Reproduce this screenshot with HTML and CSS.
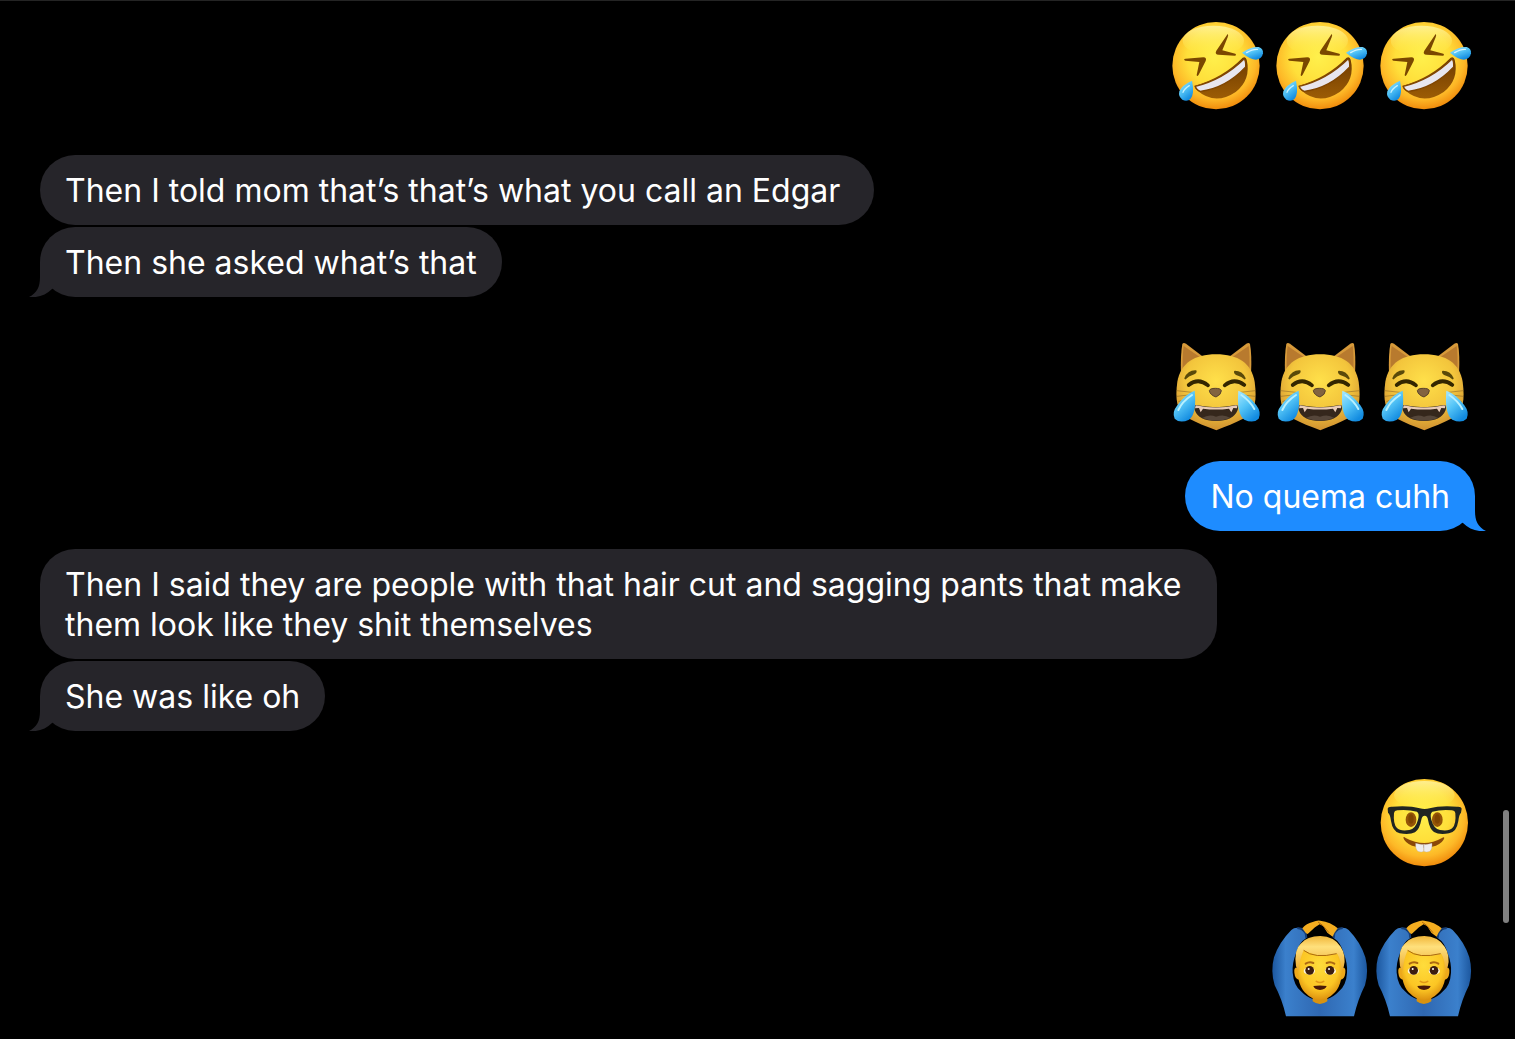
FILE: index.html
```html
<!DOCTYPE html>
<html lang="en">
<head>
    <meta charset="UTF-8">
    <meta name="viewport" content="width=device-width, initial-scale=1.0">
    <title>Messages</title>
    <link rel="stylesheet" href="styles.css">
</head>
<body>

    <!-- Shared drawings -->
    <svg class="defs" aria-hidden="true">
        <defs>
            <radialGradient id="face" cx="0.48" cy="0.4" r="0.62">
                <stop offset="0" stop-color="#fff04c"/>
                <stop offset="0.5" stop-color="#ffdf3a"/>
                <stop offset="0.78" stop-color="#fdb827"/>
                <stop offset="1" stop-color="#ee8408"/>
            </radialGradient>
            <linearGradient id="shine" x1="0" y1="0" x2="0" y2="1">
                <stop offset="0" stop-color="#fff6a8" stop-opacity="0.8"/>
                <stop offset="1" stop-color="#fff04c" stop-opacity="0"/>
            </linearGradient>
            <linearGradient id="tear" x1="0" y1="0" x2="0.6" y2="1">
                <stop offset="0" stop-color="#a9e9ff"/>
                <stop offset="0.5" stop-color="#55c5f7"/>
                <stop offset="1" stop-color="#128be0"/>
            </linearGradient>
            <linearGradient id="mouth" x1="0" y1="0" x2="0" y2="1">
                <stop offset="0" stop-color="#6e3a00"/>
                <stop offset="1" stop-color="#9c5c05"/>
            </linearGradient>
            <radialGradient id="fur" cx="0.5" cy="0.35" r="0.65">
                <stop offset="0" stop-color="#ffe04a"/>
                <stop offset="0.6" stop-color="#f3c53c"/>
                <stop offset="1" stop-color="#cf9030"/>
            </radialGradient>
            <linearGradient id="sleeve" x1="0" y1="0" x2="1" y2="0">
                <stop offset="0" stop-color="#1c579f"/>
                <stop offset="0.14" stop-color="#3b80cc"/>
                <stop offset="0.5" stop-color="#2f68b2"/>
                <stop offset="0.86" stop-color="#3b80cc"/>
                <stop offset="1" stop-color="#1c579f"/>
            </linearGradient>
            <radialGradient id="skin" cx="0.5" cy="0.4" r="0.6">
                <stop offset="0" stop-color="#ffdc3c"/>
                <stop offset="0.7" stop-color="#fcc624"/>
                <stop offset="1" stop-color="#dd9210"/>
            </radialGradient>
            <linearGradient id="hair" x1="0" y1="0" x2="0" y2="1">
                <stop offset="0" stop-color="#f0b63a"/>
                <stop offset="0.3" stop-color="#ffe07c"/>
                <stop offset="1" stop-color="#e9a72c"/>
            </linearGradient>
        </defs>

        <symbol id="rofl" viewBox="9 12 312 312">
            <circle cx="168" cy="167" r="131" fill="url(#face)"/>
            <ellipse cx="160" cy="92" rx="92" ry="45" fill="url(#shine)"/>
            <path d="M203 72 Q206 75 203 82 L187 121 L226 131 Q231 135 224 137 L176 134 Q163 133 169 122 Z" fill="#7a4700"/>
            <path d="M73 147 Q71 150 76 152 L118 156 L110 195 Q111 202 116 194 L137 153 Q141 143 130 142 L77 146 Z" fill="#7a4700"/>
            <path d="M104 227 Q188 204 248 143 Q257 138 260 149 Q274 208 227 246 Q165 288 111 241 Q102 232 104 227 Z" fill="url(#mouth)"/>
            <path d="M106 229 Q189 209 252 147 Q258 151 257 171 Q197 235 121 244 Q110 241 106 229 Z" fill="#e8e6ee" stroke="#804500" stroke-width="4"/>
            <path d="M246 128 Q273 109 296 111 Q310 115 309 130 Q306 147 288 149 Q271 149 246 128 Z" fill="url(#tear)"/>
            <path d="M260 128 Q278 117 292 118" fill="none" stroke="#d4f5ff" stroke-width="4" stroke-linecap="round"/>
            <path d="M96 212 Q66 225 58 244 Q54 259 67 269 Q82 276 92 266 Q104 250 96 212 Z" fill="url(#tear)"/>
            <path d="M88 227 Q72 237 69 247" fill="none" stroke="#c3f0ff" stroke-width="4" stroke-linecap="round"/>
        </symbol>

        <symbol id="joycat" viewBox="9 12 312 312">
            <path d="M63 132 Q61 75 67 42 Q70 36 78 41 L134 84 Z" fill="#d79a3a"/>
            <path d="M68 122 Q67 76 71 48 L124 84 Z" fill="#b87a2e"/>
            <path d="M273 132 Q276 75 270 42 Q267 36 259 41 L203 84 Z" fill="#d79a3a"/>
            <path d="M268 122 Q270 76 266 48 L213 84 Z" fill="#b87a2e"/>
            <path d="M168 73 C235 73 274 100 284 155 C291 209 286 243 258 262 C225 279 195 291 169 301 C141 291 112 279 79 262 C50 242 45 207 52 155 C62 100 103 73 168 73 Z" fill="url(#fur)"/>
            <path d="M80 141 Q90 119 111 120 Q111 126 101 128 Q89 131 80 141 Z M258 141 Q249 121 229 121 Q228 127 239 130 Q250 133 258 141 Z" transform="translate(-4 4)" fill="#5a4a0a" stroke="#5a4a0a" stroke-width="6" stroke-linejoin="round"/>
            <path d="M86 165 Q115 142 144 166 M194 166 Q223 142 253 165" fill="none" stroke="#332600" stroke-width="11" stroke-linecap="round"/>
            <path d="M50 182 L96 187 M51 199 L94 194 M55 215 L93 201 M286 182 L241 187 M285 199 L241 194 M281 215 L243 201" stroke="#98702a" stroke-width="2"/>
            <path d="M148 182 Q150 175 166 175 Q182 175 184 182 Q184 194 168 201 Q150 195 148 182 Z" fill="#826340" stroke="#5b4329" stroke-width="3"/>
            <path d="M108 225 Q168 238 228 225 Q237 225 233 240 Q220 273 168 273 Q116 273 104 240 Q101 225 108 225 Z" fill="#35271c"/>
            <path d="M107 226 Q168 239 229 226 Q234 228 231 235 L220 234 L214 247 L207 236 Q168 241 129 236 L122 247 L117 234 L105 235 Z" fill="#e9cbb7"/>
            <path d="M126 264 Q147 251 168 260 Q192 251 211 264 Q168 280 126 264 Z" fill="#55463a"/>
            <path d="M104 182 Q74 193 52 226 Q35 247 44 266 Q60 282 87 269 Q111 251 104 182 Z" fill="url(#tear)"/>
            <path d="M235 182 Q266 193 289 226 Q305 247 296 266 Q280 282 253 269 Q229 251 235 182 Z" fill="url(#tear)"/>
            <path d="M96 195 Q66 215 55 240 M244 195 Q270 213 283 237" fill="none" stroke="#b8f0ff" stroke-width="6" stroke-linecap="round"/>
        </symbol>

        <symbol id="nerd" viewBox="3 -3 312 312">
            <circle cx="163" cy="158" r="131" fill="url(#face)"/>
            <ellipse cx="163" cy="75" rx="91" ry="42" fill="url(#shine)"/>
            <ellipse cx="123" cy="149" rx="16" ry="22" fill="#955407"/>
            <ellipse cx="202" cy="149" rx="16" ry="22" fill="#955407"/>
            <ellipse cx="123" cy="147" rx="8" ry="14" fill="#804500"/>
            <ellipse cx="202" cy="147" rx="8" ry="14" fill="#804500"/>
            <path fill-rule="evenodd" d="M53 116 Q54 109 67 110 Q119 106 149 115 Q164 119 179 115 Q209 106 261 110 Q274 109 275 116 L273 128 Q267 134 265 153 Q260 186 237 190 Q207 195 192 186 Q179 177 174 149 Q172 137 164 137 Q156 137 154 149 Q149 177 135 187 Q119 195 89 190 Q68 185 63 153 Q61 134 54 128 Z M72 129 Q69 163 81 174 Q90 184 118 180 Q137 176 144 149 Q149 130 141 125 Q114 118 82 121 Q73 122 72 129 Z M256 129 Q259 163 247 174 Q238 184 210 180 Q191 176 184 149 Q179 130 187 125 Q214 118 246 121 Q255 122 256 129 Z" fill="#202522"/>
            <path d="M100 203 Q101 199 107 204 Q163 234 216 204 Q222 199 223 204 Q219 218 198 227 Q163 239 126 227 Q104 217 100 203 Z" fill="#8a4808"/>
            <path d="M137 220 Q149 224 161 223 V244 Q154 248 144 244 Q136 239 137 220 Z M162 223 Q174 224 186 220 Q187 239 179 244 Q169 248 162 244 Z" fill="#eeedf0" stroke="#b8afb0" stroke-width="1"/>
        </symbol>

        <symbol id="ok-man" viewBox="21 0 312 312">
            <path d="M78 319 Q66 267 44 226 Q31 184 42 142 Q57 97 94 60 Q103 52 117 54 L136 70 L139 84 Q116 98 108 130 Q96 160 98 188 Q101 225 123 244 Q140 262 158 267 L202 267 Q220 262 237 244 Q259 225 261 188 Q263 160 251 130 Q243 98 221 84 L224 70 L243 54 Q257 52 266 60 Q302 97 316 142 Q327 184 315 226 Q294 267 282 319 Z" fill="url(#sleeve)"/>
            <path d="M112 54 L127 57 L137 70 L139 84 M248 54 L233 57 L223 70 L221 84" fill="none" stroke="#173f78" stroke-width="6" stroke-linejoin="round"/>
            <path d="M127 55 Q139 40 158 36 Q171 30 181 32 Q212 36 233 55 L223 69 L218 80 L202 68 L190 49 L179 43 L165 52 L143 72 L138 70 Z" fill="#f4ad20"/>
            <path d="M174 36 L188 46 L207 68" fill="none" stroke="#b96d0b" stroke-width="3"/>
            <path d="M158 254 V274 Q179 290 202 274 V254 Z" fill="#d9930f"/>
            <path d="M113 173 Q101 171 103 188 Q105 209 119 209 Z M246 173 Q258 171 256 188 Q254 209 240 209 Z" fill="#eda81b"/>
            <path d="M112 150 Q112 96 180 96 Q247 96 246 150 Q251 218 225 247 Q203 270 180 270 Q156 270 134 247 Q108 218 112 150 Z" fill="url(#skin)"/>
            <path d="M108 169 Q101 119 122 101 Q141 78 181 78 Q222 79 242 110 Q260 137 251 171 L243 185 Q244 151 232 131 Q187 144 148 128 L131 121 Q119 147 116 184 Z" fill="url(#hair)"/>
            <path d="M131 121 Q163 147 230 131" fill="none" stroke="#aa690d" stroke-width="3"/>
            <path d="M137 161 Q148 154 160 159 M200 159 Q212 154 223 161" fill="none" stroke="#ad6912" stroke-width="6" stroke-linecap="round"/>
            <ellipse cx="148" cy="183" rx="17" ry="11" fill="#fff5dc"/>
            <ellipse cx="211" cy="183" rx="17" ry="11" fill="#fff5dc"/>
            <circle cx="149" cy="181" r="13" fill="#3d1d10"/>
            <circle cx="210" cy="181" r="13" fill="#3d1d10"/>
            <circle cx="146" cy="177" r="3" fill="#fff"/>
            <circle cx="207" cy="177" r="3" fill="#fff"/>
            <path d="M169 214 Q180 221 191 214" fill="none" stroke="#e19816" stroke-width="5" stroke-linecap="round"/>
            <path d="M160 228 Q180 225 200 228 Q197 239 180 240 Q163 239 160 228 Z" fill="#4a1a08"/>
        </symbol>

        <symbol id="tail" viewBox="0 0 30 35">
            <path d="M11 0 V15 C11 25 8 31 0 35 C9 36 17 33 23 27 L30 22 V0 Z"/>
        </symbol>
    </svg>

    <main class="chat">
        <div class="message sent emoji" role="img" aria-label="Rolling on the floor laughing, three times">
            <svg><use href="#rofl"/></svg>
            <svg><use href="#rofl"/></svg>
            <svg><use href="#rofl"/></svg>
        </div>

        <div class="group">
            <p class="message received">Then I told mom that’s that’s what you call an Edgar&nbsp;</p>
            <p class="message received last">Then she asked what’s that<svg class="tail" aria-hidden="true"><use href="#tail"/></svg></p>
        </div>

        <div class="message sent emoji" role="img" aria-label="Cat with tears of joy, three times">
            <svg><use href="#joycat"/></svg>
            <svg><use href="#joycat"/></svg>
            <svg><use href="#joycat"/></svg>
        </div>
        <p class="message sent last">No quema cuhh<svg class="tail" aria-hidden="true"><use href="#tail"/></svg></p>

        <div class="group reply">
            <p class="message received">Then I said they are people with that hair cut and sagging pants that make them look like they shit themselves</p>
            <p class="message received last">She was like oh<svg class="tail" aria-hidden="true"><use href="#tail"/></svg></p>
        </div>

        <div class="message sent emoji" role="img" aria-label="Nerd face">
            <svg><use href="#nerd"/></svg>
        </div>
        <div class="message sent emoji spaced" role="img" aria-label="Man gesturing OK, twice">
            <svg><use href="#ok-man"/></svg>
            <svg><use href="#ok-man"/></svg>
        </div>
    </main>

    <div class="scroll-thumb"></div>

</body>
</html>
```
FILE: styles.css
```css
* {
    box-sizing: border-box;
}

body {
    margin: 0;
    min-height: 100vh;
    background: #000;
    border-top: 1px solid #242424;
    color: #fff;
    font-family: Inter, 'Liberation Sans', sans-serif;
    font-size: 32px;
    line-height: 40px;
}

.defs {
    position: absolute;
    width: 0;
    height: 0;
}

.chat {
    display: flex;
    flex-direction: column;
    padding: 13px 40px 20px;
}

.group {
    display: flex;
    flex-direction: column;
    gap: 2px;
    margin: 37px 0;
}

.group.reply {
    margin: 18px 0 38px;
}

/* Bubbles */
.message {
    position: relative;
    max-width: 82%;
    margin: 0;
    padding: 16px 25px 14px;
    border-radius: 35px;
}

.received {
    align-self: flex-start;
    background: #26252a;
}

.sent {
    align-self: flex-end;
    background: #1e8cff;
}

.sent.last {
    margin-top: 23px;
}

/* Little hook on the last bubble of a run */
.tail {
    position: absolute;
    left: -11px;
    bottom: 0;
    width: 30px;
    height: 35px;
    fill: #26252a;
}

.sent .tail {
    left: auto;
    right: -11px;
    fill: #1e8cff;
    transform: scaleX(-1);
}

/* Big emoji without a bubble */
.emoji {
    display: flex;
    padding: 0;
    background: none;
    border-radius: 0;
}

.emoji svg {
    width: 104px;
    height: 104px;
    overflow: visible;
}

.emoji.spaced {
    margin-top: 37px;
}

symbol {
    overflow: visible;
}

.scroll-thumb {
    position: fixed;
    top: 78%;
    right: 6px;
    width: 6px;
    height: 113px;
    border-radius: 3px;
    background: #808080;
}
```
